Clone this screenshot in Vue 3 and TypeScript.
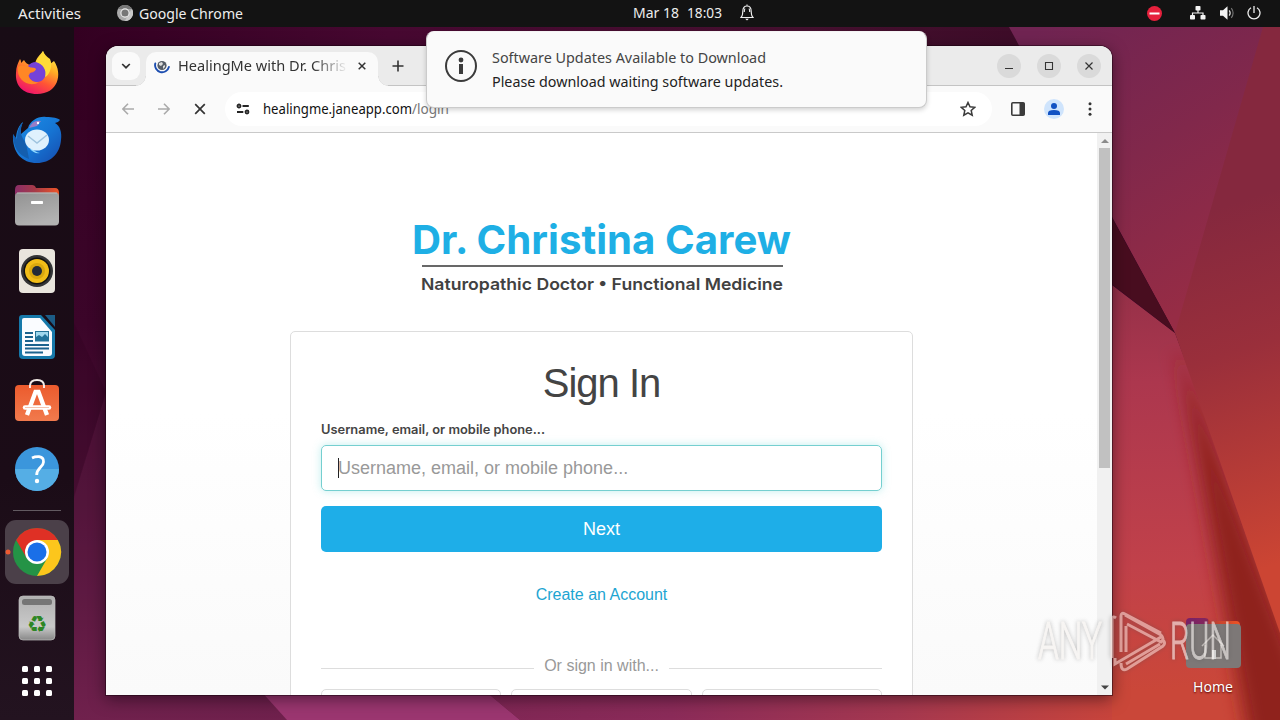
<script setup lang="ts">
import { h } from 'vue'
import type { FunctionalComponent } from 'vue'

// A single line of text set to an exact measure.
const FitText: FunctionalComponent<{ text: string; w: number; lh: number; base: number }> = (p) =>
  h('svg', { width: p.w, height: p.lh }, [
    h('text', { x: 0, y: p.base, textLength: p.w, lengthAdjust: 'spacingAndGlyphs', fill: 'currentColor' }, p.text),
  ])
FitText.props = ['text', 'w', 'lh', 'base']

const providers = ['first', 'second', 'third']
const dots = Array.from({ length: 9 }, (_, i) => ({ x: 22 + (i % 3) * 12, y: Math.floor(i / 3) * 12 }))
</script>

<template>
  <div class="desktop">
    <svg class="wallpaper" width="1280" height="720" viewBox="0 0 1280 720">
      <defs>
        <linearGradient id="left" x1="0" y1="0" x2="0" y2="1">
          <stop offset="0" stop-color="#330021" /><stop offset=".45" stop-color="#3b0529" />
          <stop offset=".7" stop-color="#4e1237" /><stop offset="1" stop-color="#70214d" />
        </linearGradient>
        <linearGradient id="top" x1="0" y1="0" x2="1" y2="0">
          <stop offset="0" stop-color="#330021" /><stop offset=".3" stop-color="#470831" />
          <stop offset=".7" stop-color="#45102f" /><stop offset="1" stop-color="#3a0a25" />
        </linearGradient>
        <linearGradient id="upper" gradientUnits="userSpaceOnUse" x1="1040" y1="30" x2="1200" y2="300">
          <stop offset="0" stop-color="#702452" /><stop offset=".5" stop-color="#81284b" /><stop offset="1" stop-color="#962c45" />
        </linearGradient>
        <linearGradient id="right" gradientUnits="userSpaceOnUse" x1="1180" y1="220" x2="1290" y2="560">
          <stop offset="0" stop-color="#85283e" /><stop offset=".4" stop-color="#9a2f3b" /><stop offset="1" stop-color="#cc4533" />
        </linearGradient>
        <linearGradient id="lower" gradientUnits="userSpaceOnUse" x1="1130" y1="280" x2="1145" y2="690">
          <stop offset="0" stop-color="#943048" /><stop offset=".25" stop-color="#ac374e" />
          <stop offset=".7" stop-color="#c1414a" /><stop offset="1" stop-color="#ca4739" />
        </linearGradient>
        <filter id="soft" x="-50%" y="-10%" width="200%" height="120%"><feGaussianBlur stdDeviation="9 4" /></filter>
        <linearGradient id="bottom" gradientUnits="userSpaceOnUse" x1="500" y1="0" x2="1110" y2="0">
          <stop offset="0" stop-color="#812755" /><stop offset=".28" stop-color="#8b2b59" />
          <stop offset=".65" stop-color="#a53850" /><stop offset="1" stop-color="#c7443c" />
        </linearGradient>
      </defs>
      <rect width="1280" height="720" fill="url(#left)" />
      <path d="M74 27H1120V120H74z" fill="url(#top)" />
      <path d="M106 392V620H74V498z" fill="#65204a" opacity=".22" />
      <path d="M74 323l32 69-32 104z" fill="#27001b" opacity=".22" />
      <path d="M1175 333L1320 720H1100V276z" fill="url(#lower)" />
      <path d="M1177 345L1340 780H1256L1216 560z" fill="#8f241d" filter="url(#soft)" />
      <path d="M1009 27H1280V333H1175z" fill="url(#upper)" />
      <path d="M1263 27H1280V633L1175 333z" fill="url(#right)" />
      <path d="M1105 205L1175 333 1105 279z" fill="#480d1f" />
      <path d="M260 690H484L520 720H287z" fill="#9b3670" />
      <path d="M484 690H1112V720H520z" fill="url(#bottom)" />
    </svg>

    <header class="topbar">
      <div class="menu">
        <FitText class="ui" text="Activities" :w="63" :lh="27" :base="19" />
        <div class="app">
          <svg width="16" height="16" viewBox="0 0 16 16"><circle cx="8" cy="8" r="8" fill="#aaa" /><path d="M1 4A8 8 0 0 1 15 4L8 4z" fill="#777" /><path d="M15 4a8 8 0 0 1-7 12l4-8z" fill="#c9c9c9" /><circle cx="8" cy="8" r="4.100" fill="#777" stroke="#eee" stroke-width="1.100" /></svg>
          <FitText class="ui" text="Google Chrome" :w="104" :lh="27" :base="19" />
        </div>
      </div>
      <div class="clock">
        <FitText class="ui" text="Mar 18" :w="46" :lh="27" :base="18" />
        <FitText class="ui" text="18:03" :w="35" :lh="27" :base="18" />
        <svg class="bell" width="14" height="17" viewBox="0 0 14 17" fill="none" stroke="#eee" stroke-width="1.100"><path d="M1 13.500c1.700-1.600 1.800-2.700 1.800-6.200C2.800 3.800 4.500 2 7 2s4.200 1.800 4.200 5.300c0 3.500.1 4.600 1.800 6.200zM5 4.500C4.300 5.400 4.300 7 4.300 8M9 4.500c.7.900.7 2.500.7 3.500M7 .5V2" /><path d="M5.200 14.800h3.600L7 16.500z" fill="#fff" stroke="none" /></svg>
      </div>
      <div class="tray">
        <svg width="15" height="15" viewBox="0 0 15 15"><circle cx="7.500" cy="7.500" r="7.500" fill="#e6203c" /><path d="M2.500 7.500h10" stroke="#fff" stroke-width="2" /></svg>
        <svg class="net" width="16" height="14" viewBox="0 0 16 14" fill="#f4f4f4"><rect x="5.500" y="0" width="5" height="4.500" rx=".8" /><rect x="0" y="9" width="5" height="4.500" rx=".8" /><rect x="10.500" y="9" width="5" height="4.500" rx=".8" /><path d="M8 4v3M2.500 9.500V7h10.500v2.500" fill="none" stroke="#f4f4f4" stroke-width="1.200" /></svg>
        <svg class="vol" width="15" height="14" viewBox="0 0 15 14"><path d="M0 4.200h3L7.500.3v13.400L3 9.800H0z" fill="#f4f4f4" /><path d="M9.200 4.300q2 2.700 0 5.400" fill="none" stroke="#ddd" stroke-width="1.200" /><path d="M11.300 2.200q3.600 4.800 0 9.600" fill="none" stroke="#777" stroke-width="1.100" /></svg>
        <svg class="power" width="14" height="14" viewBox="0 0 14 14" fill="none" stroke="#eee" stroke-width="1.300"><path d="M7 0v7M4 1.700a6 6 0 1 0 6 0" /></svg>
      </div>
    </header>

    <aside class="dock">
      <svg width="74" height="693" viewBox="0 27 74 693">
        <defs>
          <linearGradient id="fox" x1=".8" y1="0" x2=".3" y2="1"><stop offset="0" stop-color="#fff44f" /><stop offset=".35" stop-color="#ffae25" /><stop offset=".65" stop-color="#ff5634" /><stop offset="1" stop-color="#ef126d" /></linearGradient>
          <linearGradient id="bird" x1="0" y1="0" x2="1" y2="1"><stop offset="0" stop-color="#1b91e9" /><stop offset=".55" stop-color="#1674d3" /><stop offset="1" stop-color="#164bae" /></linearGradient>
          <linearGradient id="folderTab" x1="0" x2="1"><stop offset="0" stop-color="#8b2e68" /><stop offset=".45" stop-color="#a63a48" /><stop offset="1" stop-color="#ee5528" /></linearGradient>
          <linearGradient id="grey" x1="0" y1="0" x2=".4" y2="1"><stop offset="0" stop-color="#929292" /><stop offset="1" stop-color="#b2b2b2" /></linearGradient>
          <linearGradient id="orange" x1="0" y1="0" x2="0" y2="1"><stop offset="0" stop-color="#ec5b2d" /><stop offset="1" stop-color="#f17a4d" /></linearGradient>
          <linearGradient id="bin" x1="0" y1="0" x2="0" y2="1"><stop offset="0" stop-color="#b0b0b0" /><stop offset=".7" stop-color="#c9c9c9" /><stop offset="1" stop-color="#888" /></linearGradient>
        </defs>

        <!-- Firefox -->
        <path d="M20 59c1 1 1 3 1 4l3-3q2 4 6 5c2 1 4 1 5-1 1-6 5-9 8-13 1 4 3 6 5 8 1 1 1 3 2 5l4-3c9 13 4 33-17 33-15 0-22-9-21-21 0-6 2-10 4-14z" fill="url(#fox)" />
        <path d="M28 66c3-4 8-5 12-3 4 1 6 5 6 9 0 6-4 10-9 10-6 0-9-5-9-9 4 0 7-1 8-4-4 1-6-1-8-3z" fill="#7542d9" />
        <path d="M18 67c4-3 8-1 11 0 2 1 6 0 7 2-1 2-4 2-6 4-1 3-2 3-2 1 1 6 6 9 11 8-9 6-23-1-21-15z" fill="#ff8725" />
        <path d="M43 51c-2 5-6 7-7 11 7 2 11 8 9 15 5-2 8-12 5-18-4-3-6-5-7-8z" fill="#ffdb38" />

        <!-- Thunderbird -->
        <path d="M23 122q-3 5-2 12l7-6c2-7 10-12 18-11 7 0 12 1 14 3q-2 3-5 3c5 3 7 9 6 17-1 14-11 23-24 23C22 163 12 153 13 134c1 3 2 4 3 5 0-7 3-14 7-17z" fill="url(#bird)" />
        <path d="M23 122c-4 10-2 14 3 21l3 16c-11-4-16-12-16-25l4 5c0-7 2-13 6-17z" fill="#145eae" />
        <path d="M29 128q4-9 12-7l-4 5z" fill="#9a7dc7" /><circle cx="38" cy="123" r="1.200" fill="#fff" />
        <path d="M33 149q2 3 7 4-6 1-10-4z" fill="#8cd7ff" />
        <ellipse cx="37" cy="140" rx="12" ry="10.500" fill="#dff1fd" /><path d="M28 136l9 7 10-8" fill="none" stroke="#9fc4de" stroke-width="1.400" />

        <!-- Files -->
        <path d="M15 190q0-5 4-5h13q3 0 4 3h19q4 0 4 5v10H15z" fill="url(#folderTab)" />
        <rect x="15" y="192.500" width="44" height="33" rx="4" fill="url(#grey)" /><path d="M17 193h40" stroke="#ccc" stroke-width=".7" />
        <rect x="31" y="201" width="12" height="3" rx=".7" fill="#fff" />

        <!-- Rhythmbox -->
        <rect x="19" y="249" width="36" height="44" rx="4" fill="#e9e5dd" />
        <circle cx="37" cy="271" r="16" fill="#333436" /><circle cx="37" cy="271" r="13.500" fill="#111" /><circle cx="37" cy="271" r="12" fill="#f1bd18" /><circle cx="37" cy="271" r="8" fill="#d9a80e" /><circle cx="37" cy="271" r="5" fill="#222b38" />

        <!-- Writer -->
        <path d="M22 315h19l14 15v25q0 4-4 4H23q-4 0-4-4v-37q0-3 3-3z" fill="#1679aa" /><path d="M24 318h16l12 14v21q0 3-3 3H25q-3 0-3-3v-33q0-2 2-2z" fill="#fafcff" />
        <path d="M45 315h10v12z" fill="#1c5c86" /><path d="M25 333h8M25 337h8M25 341h8M25 345h24M25 348.500h24M25 352.500h18" stroke="#1c638e" stroke-width="1.900" />
        <rect x="35.500" y="331.500" width="13" height="9.500" fill="#9fd7ed" stroke="#247297" /><path d="M36 341v-4l3-2 3 2 3-3 3 3v4z" fill="#22739b" />

        <!-- Software -->
        <path d="M30 388v-2q0-6 7-6t7 6v2" fill="none" stroke="#f4ede8" stroke-width="2" />
        <rect x="15" y="385" width="44" height="36" rx="4" fill="url(#orange)" /><path d="M30 388v-3M44 388v-3" stroke="#fff" stroke-width="1.700" />
        <path d="M27 415l8.500-23h3L47 415" fill="none" stroke="#fff" stroke-width="4.300" /><path d="M25 407.500h24" stroke="#fff" stroke-width="4.500" stroke-linecap="round" /><path d="M25 407.500h24" stroke="#f09a79" stroke-width=".6" />

        <!-- Help -->
        <circle cx="37" cy="469" r="22" fill="#3b96dc" /><path d="M15 469a22 22 0 0 0 44 0z" fill="#55aee5" />
        <path d="M32 458q3-1.500 7-1.300 5 .8 4.500 5.300c0 5-7 6-6.800 13" fill="none" stroke="#fff" stroke-width="2.800" /><circle cx="37" cy="481" r="2.200" fill="#fff" />
        <path d="M13 510.500h48" stroke="#625a61" />

        <!-- Chrome -->
        <rect x="5" y="520" width="64" height="64" rx="11" fill="#4b4049" /><circle cx="8" cy="552" r="2.500" fill="#ed5a32" />
        <circle cx="37" cy="552" r="24" fill="#249346" /><path d="M16.200 540A24 24 0 0 1 57.800 540H37L26.600 558z" fill="#df3025" /><path d="M57.800 540A24 24 0 0 1 37 576L47.400 558 37 540z" fill="#fcc61c" /><circle cx="37" cy="552" r="12" fill="#fff" /><circle cx="37" cy="552" r="9.500" fill="#1a6fe8" />

        <!-- Trash -->
        <rect x="19" y="596" width="36" height="44" rx="4" fill="url(#bin)" stroke="#bebebe" stroke-width=".7" /><rect x="22" y="599" width="30" height="6" rx="2.500" fill="#757575" />
        <text class="recycle" x="37" y="632" text-anchor="middle">♻</text>
        <rect v-for="d in dots" :key="`${d.x}-${d.y}`" :x="d.x" :y="666 + d.y" width="6" height="6" rx="1.500" fill="#fff" />
      </svg>
    </aside>

    <main class="window">
      <div class="tabs">
        <div class="tabsearch"><svg width="10" height="6" viewBox="0 0 10 6"><path d="M1.200 1L5 4.700 8.800 1" fill="none" stroke="#333" stroke-width="1.700" /></svg></div>
        <div class="tab">
          <svg class="favicon" width="16" height="16" viewBox="0 0 16 16"><circle cx="8" cy="7.500" r="4.600" fill="#555c66" /><path d="M5 5l3-1 1 2-2 2-2-1zm4 3l2-1v2l-2 2z" fill="#ddd" /><path d="M1.300 5.500A7 7 0 1 0 14.900 9" fill="none" stroke="#1d4eb0" stroke-width="1.900" stroke-linecap="round" /></svg>
          <div class="tabtitle"><FitText class="ui" text="HealingMe with Dr. Chris" :w="168" :lh="30" :base="20" /></div>
          <svg class="tabclose" width="8" height="8" viewBox="0 0 8 8"><path d="M.7.7l6.600 6.600M7.300.7L.7 7.300" stroke="#333" stroke-width="1.500" /></svg>
        </div>
        <svg class="plus" width="12" height="12" viewBox="0 0 12 12"><path d="M6 .5v11M.5 6h11" stroke="#333" stroke-width="1.600" /></svg>
        <div class="controls">
          <span class="control"><svg width="10" height="10" viewBox="0 0 10 10"><path d="M1 7.500h8" stroke="#333" /></svg></span>
          <span class="control"><svg width="10" height="10" viewBox="0 0 10 10"><path d="M1.500 1.500h7v7h-7z" fill="none" stroke="#333" stroke-width="1.100" /></svg></span>
          <span class="control"><svg width="10" height="10" viewBox="0 0 10 10"><path d="M1.500 1.500l7 7m0-7l-7 7" stroke="#333" stroke-width="1.200" /></svg></span>
        </div>
      </div>
      <div class="toolbar">
        <div class="nav">
          <svg width="12" height="12" viewBox="0 0 12 12"><path d="M12 6H1M6 .7L.8 6 6 11.300" fill="none" stroke="#aaa" stroke-width="1.600" /></svg>
          <svg width="12" height="12" viewBox="0 0 12 12"><path d="M0 6h11M6 .7L11.200 6 6 11.300" fill="none" stroke="#aaa" stroke-width="1.600" /></svg>
          <svg width="12" height="12" viewBox="0 0 12 12"><path d="M1.200 1.200l9.600 9.600m0-9.600l-9.600 9.600" stroke="#333" stroke-width="1.700" /></svg>
        </div>
        <div class="omnibox">
          <svg class="tune" width="14" height="12" viewBox="0 0 14 12" fill="none" stroke="#252525" stroke-width="1.800"><circle cx="3" cy="3" r="1.500" /><path d="M6.500 3h6.300M1 9h6.300" /><circle cx="11" cy="9" r="1.500" /></svg>
          <FitText class="url host" text="healingme.janeapp.com" :w="149" :lh="33" :base="21" />
          <FitText class="url path" text="/login" :w="37" :lh="33" :base="21" />
          <svg class="star" width="16" height="16" viewBox="0 0 16 16"><path d="M8 1.500l2 4.300 4.700.5-3.500 3.200 1 4.700L8 11.800l-4.200 2.400 1-4.700L1.300 6.300 6 5.800z" fill="none" stroke="#3b3b3b" stroke-width="1.500" /></svg>
        </div>
        <div class="tools">
          <svg width="14" height="14" viewBox="0 0 14 14"><rect x=".8" y=".8" width="12.400" height="12.400" rx="1" fill="none" stroke="#3b3b3b" stroke-width="1.600" /><path d="M8.500 1h4.700v12H8.500z" fill="#3b3b3b" /></svg>
          <svg width="20" height="20" viewBox="0 0 20 20"><circle cx="10" cy="10" r="10" fill="#cfe4fc" /><circle cx="10" cy="7" r="3" fill="#1152c3" /><path d="M4 16v-2q0-3 6-3t6 3v2z" fill="#1152c3" /></svg>
          <svg width="4" height="14" viewBox="0 0 4 14" fill="#333"><circle cx="2" cy="1.700" r="1.500" /><circle cx="2" cy="7" r="1.500" /><circle cx="2" cy="12.300" r="1.500" /></svg>
        </div>
      </div>
      <div class="viewport">
        <div class="page">
          <div class="logo">
            <FitText class="name" text="Dr. Christina Carew" :w="379" :lh="42" :base="36" />
            <div class="rule"></div>
            <FitText class="subtitle" text="Naturopathic Doctor • Functional Medicine" :w="362" :lh="24" :base="18" />
          </div>
          <section class="card">
            <h1>Sign In</h1>
            <label><FitText class="label" text="Username, email, or mobile phone..." :w="224" :lh="20" :base="14" /></label>
            <div class="field"><i class="caret"></i><span>Username, email, or mobile phone...</span></div>
            <button>Next</button>
            <a>Create an Account</a>
            <div class="divider"><span>Or sign in with...</span></div>
            <div class="providers"><div v-for="p in providers" :key="p" class="provider"></div></div>
          </section>
        </div>
        <div class="scrollbar">
          <svg width="8" height="15" viewBox="0 0 8 15"><path d="M0 10l4-4 4 4z" fill="#8b8b8b" /></svg>
          <div class="thumb"></div>
          <svg class="down" width="8" height="15" viewBox="0 0 8 15"><path d="M0 5.500h8L4 9.500z" fill="#444" /></svg>
        </div>
      </div>
    </main>

    <div class="notice">
      <svg width="32" height="32" viewBox="0 0 32 32"><circle cx="16" cy="16" r="15" fill="none" stroke="#3b3b3b" stroke-width="2" /><circle cx="16" cy="10" r="2.400" fill="#3b3b3b" /><path d="M16 14v10" stroke="#3b3b3b" stroke-width="4" /></svg>
      <div class="message">
        <FitText class="ui" text="Software Updates Available to Download" :w="274" :lh="24" :base="17" />
        <FitText class="ui strong" text="Please download waiting software updates." :w="291" :lh="24" :base="17" />
      </div>
    </div>

    <div class="home">
      <svg width="56" height="52" viewBox="0 0 56 52"><defs><linearGradient id="homeTab"><stop offset="0" stop-color="#782069" /><stop offset=".4" stop-color="#87265b" /><stop offset=".42" stop-color="#b83b34" /><stop offset="1" stop-color="#ee5424" /></linearGradient></defs><path d="M1 12V5q0-4 4-4h15q3 0 5 3h26q4 0 4 4v8z" fill="url(#homeTab)" /><rect x="1" y="7" width="55" height="44" rx="4" fill="#7d7877" /><path d="M17 29l11-11 11 11M20 28v13h16V28" fill="none" stroke="#c6c1be" stroke-width="1.500" /><path d="M27 33h4v9h-4z" fill="#ddd" /></svg>
      <FitText class="ui" text="Home" :w="40" :lh="24" :base="15" />
    </div>

    <svg class="watermark" width="220" height="68" viewBox="1034 606 220 68">
      <g class="brand"><text x="1038" y="659" textLength="64" lengthAdjust="spacingAndGlyphs">ANY</text><text x="1170" y="659" textLength="61" lengthAdjust="spacingAndGlyphs">RUN</text></g>
      <g class="mark"><path d="M1116 618q-4-3-4 2v38M1121 652v-36q0-4 4-2l36 19M1126 626v26M1127 624l34 18q4-3 0-7l-36-20M1121 663q0 9 6 6l36-23q3-3 0-6M1115 658v6l46-27M1126 664l34-20" /></g>
    </svg>
  </div>
</template>

<style>
html, body { margin: 0; overflow: hidden; }
</style>
<style scoped>
* { box-sizing: border-box; }
.desktop { position: relative; width: 1280px; height: 720px; overflow: hidden; font-family: "Liberation Sans", Arial, sans-serif; }
.desktop svg { display: block; flex: none; }
.wallpaper { position: absolute; inset: 0; }
.ui { font-family: "Noto Sans", sans-serif; font-size: 14.2px; overflow: visible; }
.topbar { position: relative; height: 27px; background: #131313; color: #ededed; display: grid; grid-template-columns: 633px 1fr auto; }
.menu { display: flex; padding-left: 18px; gap: 36px; }
.app { display: flex; align-items: center; gap: 6px; }
.app > svg:first-child { margin-bottom: 1px; }
.clock { display: flex; gap: 8px; }
.clock .bell { margin: 4px 0 0 10px; }
.tray { display: flex; align-items: center; padding-right: 19px; padding-bottom: 1px; }
.tray .net { margin-left: 28px; }
.tray .vol { margin-left: 14px; }
.tray .power { margin-left: 12px; }
.dock { position: absolute; left: 0; top: 27px; width: 74px; height: 693px; background: linear-gradient(#180c15, #1b0c17 65%, #231320); }
.recycle { font-family: "DejaVu Sans", sans-serif; font-size: 23px; fill: #2d8624; }
.window { position: absolute; left: 106px; top: 46px; width: 1006px; height: 649px; background: #fff; border-radius: 12px 12px 0 0; overflow: hidden; box-shadow: 0 0 0 1px rgba(20,0,10,.45), 0 4px 16px rgba(10,0,10,.5); }
.tabs { height: 40px; display: flex; background: #ebebeb; border-bottom: 1px solid #c4c4c4; align-items: center; }
.tabsearch { width: 28px; height: 28px; margin-left: 6px; border-radius: 9px; background: #fafafa; display: grid; place-items: center; }
.tab { position: relative; margin-left: 6px; width: 232px; height: 34px; align-self: flex-end; margin-bottom: -1px; border-radius: 10px 10px 0 0; background: #fafafa; display: flex; align-items: center; padding: 0 12px 6px 8px; }
.tab::before, .tab::after { content: ""; position: absolute; bottom: 0; width: 10px; height: 10px; }
.tab::before { left: -10px; background: radial-gradient(circle at 0 0, transparent 9px, #dedede 9.500px, #fafafa 10px); }
.tab::after { right: -10px; background: radial-gradient(circle at 100% 0, transparent 9px, #dedede 9.500px, #fafafa 10px); }
.tabtitle { width: 170px; height: 30px; margin-left: 8px; color: #333; mask-image: linear-gradient(90deg, #000 135px, transparent 170px); }
.tabclose { margin-left: auto; margin-right: 0; }
.plus { margin-left: 14px; }
.controls { display: flex; gap: 16px; margin-left: auto; margin-right: 11px; }
.control { width: 24px; height: 24px; border-radius: 50%; background: #dadada; display: grid; place-items: center; }
.toolbar { height: 47px; background: #fafafa; border-bottom: 1px solid #c9c9c9; display: flex; align-items: center; }
.nav { display: flex; gap: 24px; margin-left: 16px; }
.omnibox { display: flex; align-items: center; width: 767px; height: 34px; border-radius: 17px; background: #fff; margin-left: 19px; padding-left: 11px; }
.url { font-family: "Noto Sans", sans-serif; font-size: 14.5px; overflow: visible; }
.host { margin-left: 13px; color: #111; }
.path { color: #777; }
.star { margin-left: auto; margin-right: 16px; }
.tools { display: flex; align-items: center; margin-left: 19px; gap: 26px; }
.tools svg:nth-child(1) { margin-right: -7px; }
.tools svg:nth-child(3) { margin-left: -2px; }
.viewport { display: flex; height: 562px; }
.page { width: 991px; height: 562px; overflow: hidden; background: linear-gradient(#fff 0, #fff 50%, #fafafa 100%); }
.logo { width: 380px; height: 80px; margin: 84px auto 0; padding-top: 1px; }
.name { font-family: Inter, sans-serif; font-weight: 700; font-size: 40px; color: #1eafe5; overflow: visible; }
.rule { height: 2px; margin: 5px 9px 0 10px; background: #686868; }
.subtitle { font-family: Inter, sans-serif; font-weight: 600; font-size: 16.500px; color: #414141; margin: 5px 0 0 9px; overflow: visible; }
.card { width: 623px; height: 400px; margin: 34px auto 0; padding: 26px 30px 0; border: 1px solid #ddd; border-radius: 5px; background: #fff; color: #444; }
h1 { margin: 0; height: 50px; line-height: 50px; font-weight: 400; font-size: 40px; letter-spacing: -1px; text-align: center; }
label { display: block; height: 37px; padding-top: 12px; }
.label { font-family: Inter, sans-serif; font-weight: 600; font-size: 12.500px; color: #444; overflow: visible; }
.field { height: 46px; border: 1px solid #75cfd0; border-radius: 5px; box-shadow: 0 0 8px rgba(77,207,207,.35); color: #999; font-size: 18px; display: flex; align-items: center; padding-left: 16px; }
.caret { width: 1px; height: 20px; margin-right: -1px; background: #222; }
button { display: block; width: 100%; height: 46px; margin: 15px 0 0; padding: 0; border: 0; border-radius: 5px; background: #1eaee8; color: #fff; font: 18px "Liberation Sans", sans-serif; }
a { display: block; margin-top: 33px; height: 20px; line-height: 20px; font-size: 16px; color: #1da5d2; text-align: center; }
.divider { margin-top: 51px; height: 20px; line-height: 20px; font-size: 16px; color: #999; display: flex; gap: 10px; }
.divider::before, .divider::after { content: ""; flex: 1; height: 1px; background: #ddd; margin-top: 12px; }
.providers { display: grid; grid-template-columns: repeat(3, 1fr); gap: 10px; margin-top: 13px; }
.provider { height: 46px; border: 1px solid #ddd; border-radius: 5px; }
.scrollbar { width: 15px; background: #f1f1f1; display: flex; flex-direction: column; align-items: center; }
.thumb { width: 11px; height: 320px; background: #c1c1c1; }
.down { margin-top: auto; }
.notice { position: absolute; left: 426px; top: 31px; width: 501px; height: 77px; border: 1px solid #cbcbcb; border-top-color: #f4f4f4; border-radius: 8px; background: #fafafa; box-shadow: 0 2px 5px rgba(0,0,0,.18); display: flex; padding: 18px 18px; gap: 15px; color: #444; }
.message { margin-top: -4px; }
.strong { color: #222; }
.home { position: absolute; left: 1185px; top: 617px; width: 56px; color: #fff; display: flex; flex-direction: column; align-items: center; gap: 8px; text-shadow: 0 1px 2px #500; }
.watermark { position: absolute; left: 1034px; top: 606px; filter: drop-shadow(0 0 2px rgba(80,80,80,.6)); opacity: .62; overflow: visible; }
.brand { fill: #f6f2ef; stroke: #f6f2ef; stroke-width: 1px; font-family: Roboto, sans-serif; font-size: 51px; font-weight: 300; }
.mark { fill: none; stroke: #f1d4cf; stroke-width: 3px; }
</style>
